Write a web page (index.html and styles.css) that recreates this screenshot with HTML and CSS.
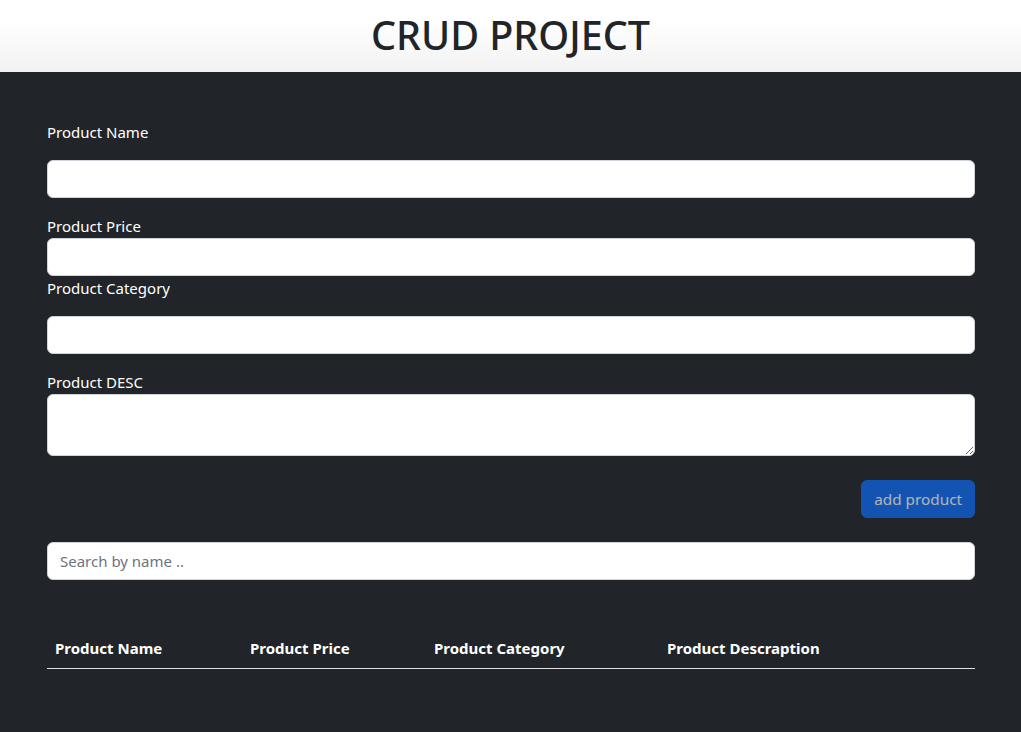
FILE: index.html
```html
<!DOCTYPE html>
<html lang="en">
<head>
<meta charset="utf-8">
<title>CRUD PROJECT</title>
<link rel="stylesheet" href="styles.css">
</head>
<body>
<header class="top">
  <h1 class="title">CRUD PROJECT</h1>
</header>
<main class="main">
  <div class="wrap">
    <label class="label gap-after" for="pname">Product Name</label>
    <input class="field" id="pname" type="text">
    <label class="label gap-before" for="pprice">Product Price</label>
    <input class="field" id="pprice" type="number">
    <label class="label gap-after" for="pcat">Product Category</label>
    <input class="field" id="pcat" type="text">
    <label class="label gap-before" for="pdesc">Product DESC</label>
    <textarea class="field area" id="pdesc" rows="2"></textarea>
    <div class="actions">
      <button class="btn" type="button" disabled>add product</button>
    </div>
    <input class="field search" type="text" placeholder="Search by name ..">
    <table class="table">
      <colgroup>
        <col class="c1"><col class="c2"><col class="c3"><col class="c4">
      </colgroup>
      <thead>
        <tr>
          <th>Product Name</th>
          <th>Product Price</th>
          <th>Product Category</th>
          <th>Product Descraption</th>
        </tr>
      </thead>
      <tbody></tbody>
    </table>
  </div>
</main>
</body>
</html>
```
FILE: styles.css
```css
* { box-sizing: border-box; }
html, body { margin: 0; padding: 0; }
body {
  font-family: "Noto Sans", "Open Sans", "Liberation Sans", sans-serif;
  font-size: 16px;
  line-height: 24px;
  background: #212529;
  color: #fff;
  min-height: 732px;
}
.top {
  height: 72px;
  background: linear-gradient(to bottom, #ffffff 0%, #ffffff 30%, #f2f2f2 100%);
  display: flex;
  align-items: center;
  justify-content: center;
}
.title {
  margin: 0;
  font-size: 39.5px;
  font-weight: 500;
  color: #212529;
  line-height: 1.2;
  letter-spacing: 0;
}
.main {
  padding: 48px 46px 40px 47px;
}
.wrap {
  display: flex;
  flex-direction: column;
}
.label {
  display: block;
  font-size: 15px;
  line-height: 24px;
  color: #fff;
}
.gap-after { margin-bottom: 16px; }
.gap-before { margin-top: 16px; }
.field {
  display: block;
  width: 100%;
  height: 38px;
  padding: 6px 12px;
  font: inherit;
  font-size: 15px;
  color: #212529;
  background: #fff;
  border: 1px solid #ced4da;
  border-radius: 6px;
  outline: none;
}
.area {
  height: 62px;
  resize: vertical;
}
.actions {
  display: flex;
  justify-content: flex-end;
  margin-top: 24px;
}
.btn {
  height: 38px;
  padding: 6px 12px;
  font: inherit;
  font-size: 15.3px;
  color: #fff;
  background: #0d6efd;
  border: 1px solid #0d6efd;
  border-radius: 6px;
}
.btn:disabled { opacity: 0.65; }
.search { margin-top: 24px; }
.search::placeholder { color: #6c757d; }
.table {
  margin-top: 48px;
  width: 100%;
  border-collapse: collapse;
  table-layout: fixed;
}
.c1 { width: 195px; }
.c2 { width: 184px; }
.c3 { width: 233px; }
.c4 { width: auto; }
.table th {
  text-align: left;
  padding: 8px;
  font-size: 15px;
  font-weight: 700;
  line-height: 24px;
  color: #fff;
  border-bottom: 1px solid #dee2e6;
  white-space: nowrap;
}
```
